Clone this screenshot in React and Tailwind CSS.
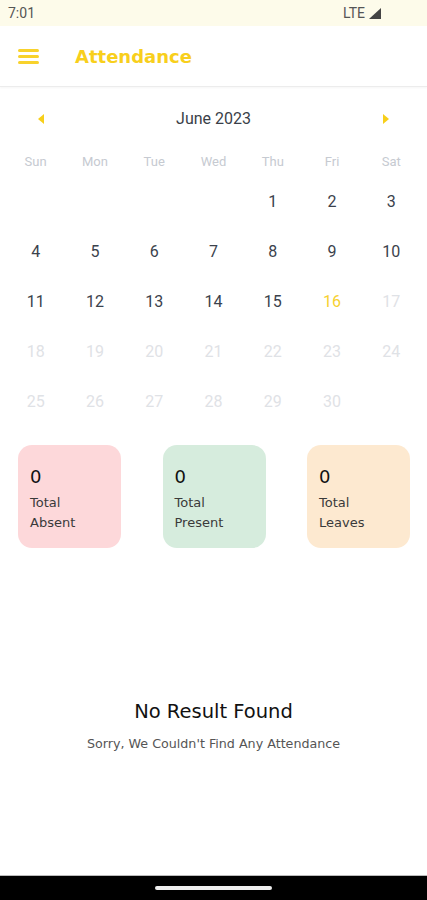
import React from 'react';

const days = ['Sun', 'Mon', 'Tue', 'Wed', 'Thu', 'Fri', 'Sat'];
const TODAY = 16;

// June 2023 starts on Thursday
const cells = [...Array(4).fill(null), ...Array.from({ length: 30 }, (_, i) => i + 1)];

const stats = [
  { label: ['Total', 'Absent'], bg: 'bg-[#fdd8da]' },
  { label: ['Total', 'Present'], bg: 'bg-[#d6ecdd]' },
  { label: ['Total', 'Leaves'], bg: 'bg-[#fde9d0]' },
];

function dayColor(d) {
  if (d === TODAY) return 'text-[#f7d12f]';
  if (d > TODAY) return 'text-[#dfe2e6]';
  return 'text-[#3b424c]';
}

export default function App() {
  return (
    <div className="flex h-[900px] w-full flex-col bg-white font-['DejaVu_Sans',sans-serif]">
      {/* status bar */}
      <div className="flex h-[26px] shrink-0 items-center justify-between bg-[#fdfbea] pl-[8px] pr-[46px] font-['Roboto',sans-serif] text-[14px] text-[#555]">
        <span>7:01</span>
        <div className="flex items-center gap-[4px]">
          <span>LTE</span>
          <svg width="12" height="11" viewBox="0 0 12 11">
            <path d="M12 0 L12 11 L0 11 Z" fill="#444" />
          </svg>
        </div>
      </div>

      {/* app bar */}
      <div className="flex h-[61px] shrink-0 items-center border-b border-[#ececec] pl-[18px] shadow-[0_1px_2px_rgba(0,0,0,0.04)]">
        <div className="flex w-[21px] flex-col gap-[3px]">
          <span className="h-[3px] rounded-full bg-[#f8d22c]" />
          <span className="h-[3px] rounded-full bg-[#f8d22c]" />
          <span className="h-[3px] rounded-full bg-[#f8d22c]" />
        </div>
        <h1 className="ml-[36px] text-[18px] font-bold text-[#f8cf1c]">Attendance</h1>
      </div>

      {/* calendar */}
      <div className="flex-1">
        <div className="px-[6px] pt-[12px] font-['Roboto',sans-serif]">
          <div className="flex h-[40px] items-center justify-between px-[32px]">
            <svg width="6" height="10" viewBox="0 0 6 10">
              <path d="M6 0 L0 5 L6 10 Z" fill="#f7cf1a" />
            </svg>
            <span className="text-[16px] text-[#3a3f48]">June 2023</span>
            <svg width="6" height="10" viewBox="0 0 6 10">
              <path d="M0 0 L6 5 L0 10 Z" fill="#f7cf1a" />
            </svg>
          </div>
          <div className="mt-[8px] grid h-[30px] grid-cols-7 items-center">
            {days.map((d) => (
              <span key={d} className="text-center text-[13px] text-[#c6cad1]">{d}</span>
            ))}
          </div>
          <div className="grid grid-cols-7">
            {cells.map((d, i) => (
              <div key={i} className={`flex h-[50px] items-center justify-center text-[16px] ${d ? dayColor(d) : ''}`}>
                {d}
              </div>
            ))}
          </div>
        </div>

        {/* stat cards */}
        <div className="mt-[18px] flex justify-between pl-[18px] pr-[17px]">
          {stats.map((s) => (
            <div key={s.label[1]} className={`h-[103px] w-[103px] rounded-[14px] pl-[12px] pt-[19px] ${s.bg}`}>
              <div className="text-[18px] leading-[26px] text-[#111]">0</div>
              <div className="mt-[3px] text-[13px] leading-[20px] text-[#3a3a3a]">
                <div>{s.label[0]}</div>
                <div>{s.label[1]}</div>
              </div>
            </div>
          ))}
        </div>

        {/* empty state */}
        <div className="mt-[151px] flex flex-col items-center">
          <h2 className="text-[19.5px] leading-[26px] text-[#111]">No Result Found</h2>
          <p className="mt-[9px] text-[12.7px] text-[#555]">Sorry, We Couldn't Find Any Attendance</p>
        </div>
      </div>

      {/* nav bar */}
      <div className="flex h-[25px] shrink-0 items-center justify-center border-t border-[#bbb] bg-black">
        <span className="h-[4px] w-[117px] rounded-full bg-[#eee]" />
      </div>
    </div>
  );
}
